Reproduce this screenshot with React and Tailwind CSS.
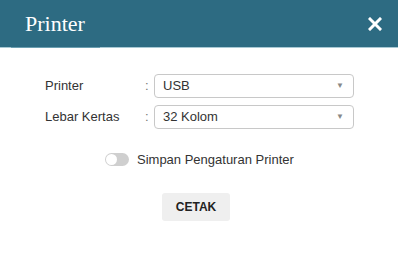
export default function App() {
  const sans = { fontFamily: '"Liberation Sans", Arial, sans-serif' }

  return (
    <div className="w-[398px] h-[255px] bg-white" style={sans}>
      {/* Header */}
      <div className="h-[47px] bg-[#2d6b82] flex items-center justify-between pl-[25px] pr-[16px]">
        <h1 className="text-[22px] text-white leading-none" style={{ fontFamily: '"Liberation Serif", "DejaVu Serif", serif' }}>
          Printer
        </h1>
        <button className="text-white">
          <svg width="14" height="14" viewBox="0 0 14 14">
            <path d="M2 2 L12 12 M12 2 L2 12" stroke="white" strokeWidth="3" strokeLinecap="square" />
          </svg>
        </button>
      </div>
      <div className="h-px bg-[#a8c9d4] flex">
        <div className="ml-[11px] w-[89px] bg-[#6b9fb1]" />
      </div>

      {/* Form */}
      <div className="pt-[26px] pl-[45px] flex flex-col gap-[7px]">
        <div className="flex items-center h-[24px]">
          <span className="w-[100px] text-[13px] text-[#333]">Printer</span>
          <span className="w-[9px] text-[13px] text-[#777]">:</span>
          <div className="w-[200px] h-[24px] border border-[#c8c8c8] rounded-[4px] flex items-center justify-between pl-[8px] pr-[9px]">
            <span className="text-[13px] text-[#333]">USB</span>
            <span className="text-[8px] text-[#888]">▼</span>
          </div>
        </div>
        <div className="flex items-center h-[24px]">
          <span className="w-[100px] text-[13px] text-[#333]">Lebar Kertas</span>
          <span className="w-[9px] text-[13px] text-[#777]">:</span>
          <div className="w-[200px] h-[24px] border border-[#c8c8c8] rounded-[4px] flex items-center justify-between pl-[8px] pr-[9px]">
            <span className="text-[13px] text-[#333]">32 Kolom</span>
            <span className="text-[8px] text-[#888]">▼</span>
          </div>
        </div>
      </div>

      {/* Toggle */}
      <div className="mt-[21px] pl-[105px] flex items-center gap-[8px]">
        <div className="w-[24px] h-[13px] rounded-full bg-[#cfcfcf] flex items-center pl-[1px]">
          <div className="w-[11px] h-[11px] rounded-full bg-white" />
        </div>
        <span className="text-[13px] text-[#333]">Simpan Pengaturan Printer</span>
      </div>

      {/* Button */}
      <div className="mt-[23px] pl-[162px]">
        <button className="w-[68px] h-[28px] bg-[#efefef] rounded-[3px] text-[12px] font-bold text-[#222]">
          CETAK
        </button>
      </div>
    </div>
  )
}
